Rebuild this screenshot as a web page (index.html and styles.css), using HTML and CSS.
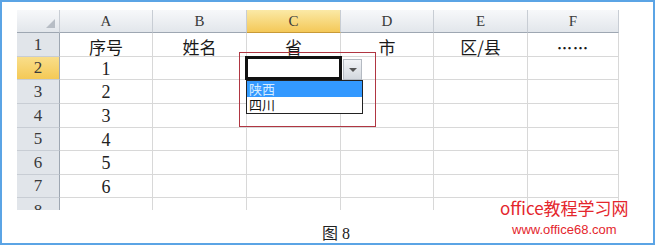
FILE: index.html
```html
<!DOCTYPE html>
<html lang="zh-CN">

<head>
  <meta charset="UTF-8" />
  <title>图 8</title>
  <link rel="stylesheet" href="styles.css">
</head>

<body>

  <div class="frame">
    <div class="sheet">
      <!-- header row -->
      <div class="hd corner"><span class="tri"></span></div>
      <div class="hd">A</div>
      <div class="hd">B</div>
      <div class="hd hd-on">C</div>
      <div class="hd">D</div>
      <div class="hd">E</div>
      <div class="hd">F</div>

      <div class="rh">1</div>
      <div class="cell zh">序号</div>
      <div class="cell zh">姓名</div>
      <div class="cell zh">省</div>
      <div class="cell zh">市</div>
      <div class="cell zh">区/县</div>
      <div class="cell zh dots">……</div>

      <div class="rh rh-on">2</div>
      <div class="cell num">1</div>
      <div class="cell"></div><div class="cell"></div><div class="cell"></div><div class="cell"></div><div class="cell"></div>

      <div class="rh">3</div>
      <div class="cell num">2</div>
      <div class="cell"></div><div class="cell"></div><div class="cell"></div><div class="cell"></div><div class="cell"></div>

      <div class="rh">4</div>
      <div class="cell num">3</div>
      <div class="cell"></div><div class="cell"></div><div class="cell"></div><div class="cell"></div><div class="cell"></div>

      <div class="rh">5</div>
      <div class="cell num">4</div>
      <div class="cell"></div><div class="cell"></div><div class="cell"></div><div class="cell"></div><div class="cell"></div>

      <div class="rh">6</div>
      <div class="cell num">5</div>
      <div class="cell"></div><div class="cell"></div><div class="cell"></div><div class="cell"></div><div class="cell"></div>

      <div class="rh">7</div>
      <div class="cell num">6</div>
      <div class="cell"></div><div class="cell"></div><div class="cell"></div><div class="cell"></div><div class="cell"></div>

      <div class="rh rh-cut">8</div>
      <div class="cell cut"></div>
      <div class="cell cut"></div><div class="cell cut"></div><div class="cell cut"></div><div class="cell cut"></div><div class="cell cut"></div>

      <!-- data validation dropdown -->
      <div class="mark"></div>
      <div class="active"></div>
      <div class="arrow"><span></span></div>
      <ul class="list">
        <li class="sel">陕西</li>
        <li>四川</li>
      </ul>
    </div>

    <div class="caption">图 8</div>

    <div class="brand">
      <div class="brand-name">office教程学习网</div>
      <div class="brand-url">www.office68.com</div>
    </div>
  </div>

</body>

</html>
```

FILE: styles.css
```css
/* page */
body {
  margin: 0;
  background: #fff;
}

.frame {
  position: relative;
  width: 655px;
  height: 245px;
  box-sizing: border-box;
  border: 2px solid #5ba4e5;
  padding: 8px 0 0 15px;
  background: #fff;
}

/* worksheet grid */
.sheet {
  position: relative;
  display: grid;
  grid-template-columns: 43px 93px 94px 94px 93px 94px 91px;
  grid-template-rows: 23px 24px 23px 24px 24px 23px 24px 23px 12px;
  width: 602px;
  overflow: hidden;
  font-family: "Liberation Serif", serif;
  color: #222;
}

.sheet > div {
  box-sizing: border-box;
  display: flex;
  align-items: center;
  justify-content: center;
}

.hd {
  background: linear-gradient(#f7f8fa, #e2e6eb);
  border-right: 1px solid #c8cdd4;
  border-bottom: 1px solid #9ea7b2;
  font-size: 15px;
  color: #3a3a3a;
}

.hd-on {
  background: linear-gradient(#fbe9a6, #f4c858);
  border-bottom-color: #c89a38;
}

.corner {
  position: relative;
}

.tri {
  position: absolute;
  right: 4px;
  bottom: 4px;
  width: 0;
  height: 0;
  border-left: 9px solid transparent;
  border-bottom: 9px solid #b7bdc5;
}

.rh {
  background: #e1e5ea;
  border-right: 1px solid #9ea7b2;
  border-bottom: 1px solid #c8cdd4;
  font-size: 17px;
  color: #3a3a3a;
}

.rh-on {
  background: linear-gradient(#f9de8a, #f4c956);
}

.rh-cut {
  align-items: flex-start !important;
  padding-top: 3px;
  border-bottom: none;
}

.cell {
  border-right: 1px solid #d8d8d8;
  border-bottom: 1px solid #d8d8d8;
}

.cell.cut {
  border-bottom: none;
}

.zh {
  padding-top: 3px;
  font-family: "Noto Sans CJK SC", sans-serif;
  font-size: 17px;
  color: #1a1a1a;
}

.dots {
  padding-top: 6px;
  font-size: 15px;
  font-weight: bold;
  letter-spacing: 1px;
}

.num {
  padding-top: 2px;
  font-size: 18px;
}

/* dropdown over C2 */
.mark {
  position: absolute;
  left: 222px;
  top: 42px;
  width: 137px;
  height: 75px;
  border: 1px solid #b03642;
}

.active {
  position: absolute;
  left: 228px;
  top: 46px;
  width: 97px;
  height: 24px;
  border: 3px solid #111;
}

.arrow {
  position: absolute;
  left: 326px;
  top: 49px;
  width: 19px;
  height: 21px;
  background: linear-gradient(#f1f3f6, #d3d8de);
  border: 1px solid #b4bac2;
}

.arrow span {
  width: 0;
  height: 0;
  border-left: 4px solid transparent;
  border-right: 4px solid transparent;
  border-top: 4px solid #555;
}

.list {
  position: absolute;
  left: 229px;
  top: 70px;
  width: 117px;
  height: 34px;
  margin: 0;
  padding: 0;
  list-style: none;
  box-sizing: border-box;
  border: 1px solid #222;
  background: #fff;
  font-family: "Noto Sans CJK SC", sans-serif;
  font-size: 13px;
  line-height: 16px;
}

.list li {
  height: 16px;
  padding-left: 2px;
  color: #111;
}

.list li.sel {
  background: #3399ff;
  color: #d6ecff;
}

/* caption */
.caption {
  margin: 10px 0 0 305px;
  font-family: "Liberation Serif", "Noto Sans CJK SC", serif;
  font-size: 16px;
  color: #222;
}

/* watermark */
.brand {
  position: absolute;
  left: 498px;
  top: 195px;
  color: #e4262d;
  text-align: center;
}

.brand-name {
  font-family: "Noto Sans CJK SC", sans-serif;
  font-size: 17px;
  line-height: 22px;
}

.brand-url {
  margin-top: 3px;
  font-family: "Liberation Sans", sans-serif;
  font-size: 13px;
  line-height: 15px;
}
```
